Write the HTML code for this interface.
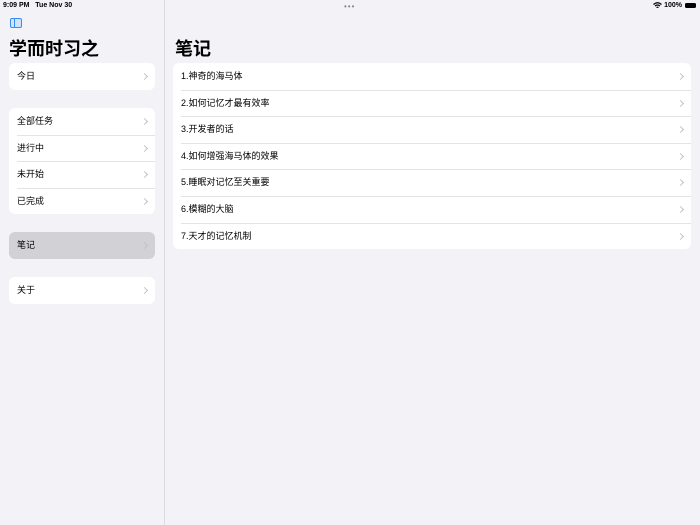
<!DOCTYPE html>
<html><head><meta charset="utf-8"><style>
*{margin:0;padding:0;box-sizing:border-box}
body{width:700px;height:525px;background:#f2f2f7;font-family:"Liberation Sans","Noto Sans CJK SC",sans-serif;position:relative;overflow:hidden;color:#000}
.side{position:absolute;left:0;top:0;width:165px;height:525px;border-right:1px solid #dcdce0;background:#f2f2f7}
.st{position:absolute;top:2px;font-size:7px;font-weight:bold}
.card{position:absolute;background:#fff;border-radius:6px;overflow:hidden}
.row{height:26.6px;line-height:26.6px;font-size:9px;padding-left:8px;position:relative}
.row:after{content:"";position:absolute;right:8px;top:11px;width:4px;height:4px;border-right:1px solid #c4c4c7;border-top:1px solid #c4c4c7;transform:rotate(45deg)}
.row+.row:before{content:"";position:absolute;left:8px;right:0;top:0;border-top:1px solid #e4e4e7}
h1{position:absolute;font-size:18px;font-weight:bold;line-height:20px}
</style></head><body>
<div class="side">
<div class="st" style="left:3px">9:09 PM&nbsp;&nbsp;&nbsp;Tue Nov 30</div>
<div style="position:absolute;left:10px;top:18px;width:12px;height:10px;border:1.3px solid #3a8cf0;border-radius:2px;background:#cfe3fb"><div style="position:absolute;left:2.5px;top:0;bottom:0;border-left:1.2px solid #3a8cf0"></div></div>
<h1 style="left:9px;top:39px">学而时习之</h1>
<div class="card" style="left:9px;top:63px;width:146px"><div class="row">今日</div></div>
<div class="card" style="left:9px;top:108px;width:146px"><div class="row">全部任务</div><div class="row">进行中</div><div class="row">未开始</div><div class="row">已完成</div></div>
<div class="card" style="left:9px;top:232px;width:146px;background:#d1d1d6"><div class="row">笔记</div></div>
<div class="card" style="left:9px;top:277px;width:146px"><div class="row">关于</div></div>
</div>
<div style="position:absolute;left:344px;top:5px;font-size:8px;color:#888;letter-spacing:1px;line-height:4px">•••</div>
<div class="st" style="right:4px;display:flex;align-items:center;gap:2px">
<svg width="9" height="7" viewBox="0 0 9 7"><path d="M0.5 2.5 Q4.5 -1 8.5 2.5 M2 4 Q4.5 2 7 4 M3.5 5.5 Q4.5 5 5.5 5.5" stroke="#000" stroke-width="1.2" fill="none"/></svg>
<span>100%</span><span style="display:inline-block;width:11px;height:5px;background:#000;border-radius:1.5px;margin-left:1px"></span></div>
<h1 style="left:175px;top:39px">笔记</h1>
<div class="card" style="left:173px;top:63px;width:518px">
<div class="row">1.神奇的海马体</div><div class="row">2.如何记忆才最有效率</div><div class="row">3.开发者的话</div><div class="row">4.如何增强海马体的效果</div><div class="row">5.睡眠对记忆至关重要</div><div class="row">6.模糊的大脑</div><div class="row">7.天才的记忆机制</div>
</div>
</body></html>
